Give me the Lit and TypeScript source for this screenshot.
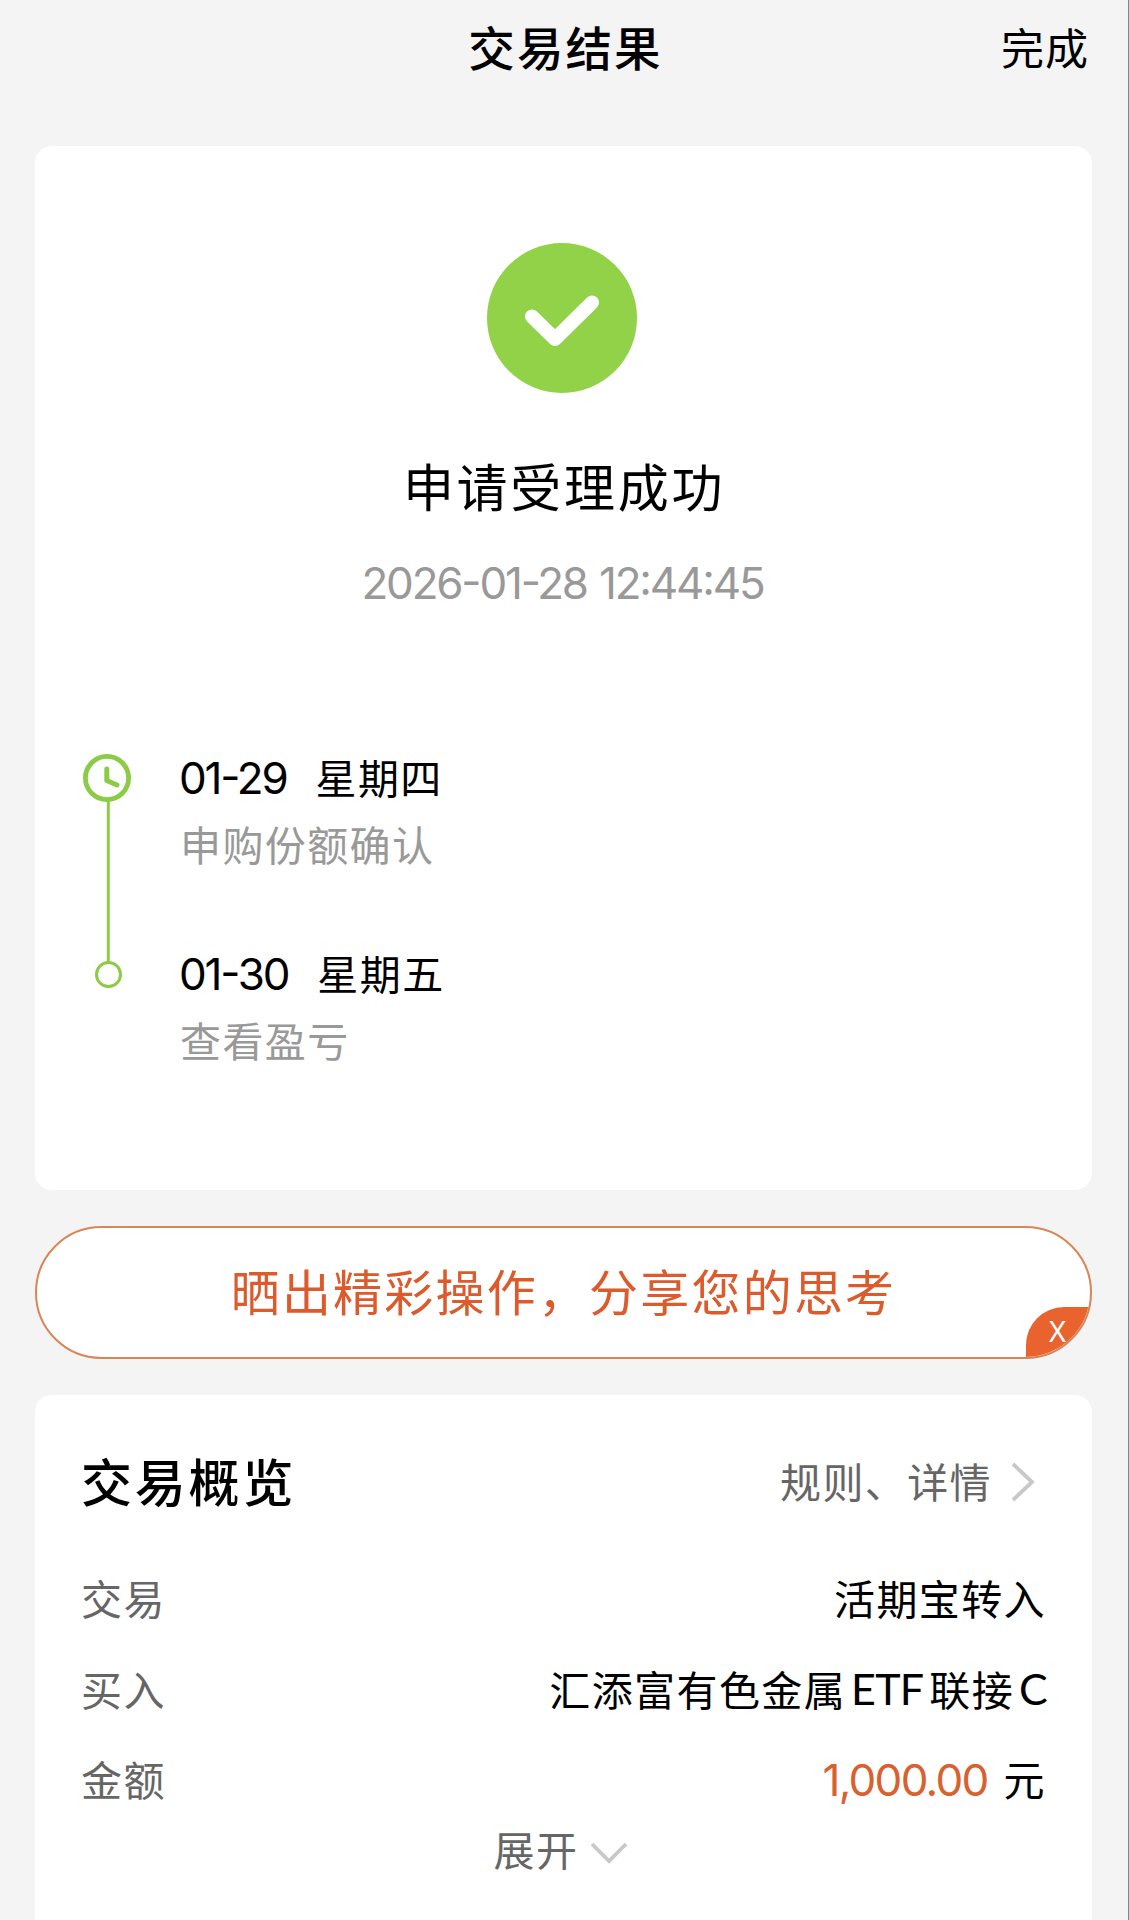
import { LitElement, html, css, svg } from "lit";
import { customElement } from "lit/decorators.js";

@customElement("app-root")
export class AppRoot extends LitElement {
  static styles = css`
    :host {
      display: block;
      font-family: "Noto Sans CJK SC", sans-serif;
      color: #000;
    }
    * {
      box-sizing: border-box;
    }
    .page {
      width: 1129px;
      height: 1920px;
      overflow: hidden;
      background: #f4f4f4;
      border-right: 1px solid #858585;
      padding: 0 36px 0 35px;
      display: flex;
      flex-direction: column;
    }
    .cjk {
      font-size: 41px;
      letter-spacing: 1.4px;
      line-height: 50px;
      white-space: nowrap;
    }
    .num {
      font-family: "Inter", sans-serif;
      font-size: 44px;
      letter-spacing: -2.2px;
      line-height: 50px;
      font-feature-settings: "case" 1;
    }
    header {
      flex: none;
      height: 146px;
      display: grid;
      grid-template-columns: 1fr auto 1fr;
      align-items: start;
      padding-right: 3px;
    }
    .title {
      grid-column: 2;
      font-size: 46.5px;
      font-weight: 500;
      letter-spacing: 2.1px;
      line-height: 60px;
      margin-top: 16px;
      margin-left: 7px;
    }
    .done {
      justify-self: end;
      font-size: 43px;
      letter-spacing: 1px;
      line-height: 60px;
      margin-top: 16px;
    }
    .card {
      background: #fff;
      border-radius: 17px;
    }
    .result {
      flex: none;
      height: 1044px;
      display: flex;
      flex-direction: column;
      align-items: center;
    }
    .check {
      display: block;
      width: 152px;
      height: 152px;
      margin-top: 96px;
      margin-right: 3px;
    }
    .status {
      font-size: 51px;
      letter-spacing: 2.7px;
      line-height: 64px;
      margin-top: 59px;
      margin-left: 1px;
      white-space: nowrap;
    }
    .stamp {
      color: #999;
      margin-top: 41px;
      margin-right: 2px;
      word-spacing: 2px;
      white-space: nowrap;
    }
    .timeline {
      align-self: stretch;
      display: flex;
      margin-top: 144px;
      padding-left: 47px;
    }
    .rail {
      display: block;
      width: 52px;
      height: 240px;
      margin-right: 45px;
    }
    .steps {
      display: flex;
      flex-direction: column;
      gap: 76px;
      padding-top: 1px;
    }
    .step {
      display: flex;
      flex-direction: column;
      gap: 15px;
      height: 120px;
    }
    .when {
      display: flex;
      align-items: center;
      gap: 29px;
    }
    .when .cjk {
      position: relative;
      top: -2px;
    }
    .note {
      color: #999;
      padding-left: 1px;
    }
    .share {
      flex: none;
      position: relative;
      height: 133px;
      margin-top: 36px;
      background: #fff;
      border: 2px solid #d98558;
      border-radius: 67px;
      color: #dc5a2b;
      font-size: 49px;
      letter-spacing: 2.2px;
      line-height: 124px;
      text-align: center;
      white-space: nowrap;
      overflow: hidden;
    }
    .close {
      position: absolute;
      right: 0;
      bottom: 0;
      width: 64px;
      height: 50px;
      border-top-left-radius: 38px;
      background: #e8632e;
      color: #fff;
      font-family: "Noto Sans", sans-serif;
      font-size: 29px;
      letter-spacing: 0;
      line-height: 48px;
      padding-right: 1px;
    }
    .overview {
      flex: none;
      height: 560px;
      margin-top: 36px;
      padding: 55px 46px 0 46px;
      display: flex;
      flex-direction: column;
    }
    .head,
    .row {
      display: flex;
      justify-content: space-between;
      align-items: center;
    }
    .head {
      height: 60px;
      margin-bottom: 42px;
    }
    .heading {
      font-size: 51px;
      font-weight: 500;
      letter-spacing: 2.8px;
      line-height: 60px;
    }
    .more {
      display: flex;
      align-items: center;
      gap: 18px;
      color: #666;
      margin-right: 10px;
    }
    .more .chev {
      margin-top: 3px;
    }
    .row {
      height: 90.5px;
    }
    .label,
    .expand {
      color: #666;
    }
    .value {
      display: flex;
      align-items: center;
    }
    .latin {
      font-family: "Lato", sans-serif;
      font-size: 43px;
      letter-spacing: -0.8px;
      line-height: 50px;
      margin: 0 6px 0 5px;
      padding-top: 3px;
    }
    .tail {
      margin: 0 -1px 0 5px;
    }
    .amount {
      color: #d9602f;
      letter-spacing: -1.7px;
      margin-right: 16px;
      padding-top: 4px;
    }
    .expand {
      align-self: center;
      display: flex;
      align-items: center;
      gap: 12px;
      margin-top: -1px;
      margin-right: 5px;
    }
    .chev {
      display: block;
      flex: none;
      fill: none;
      stroke: #c8c8c8;
      stroke-width: 3.8;
    }
    .down {
      margin-top: 10px;
    }
  `;

  private check() {
    return svg`<svg class="check" viewBox="0 0 152 152">
      <circle cx="76" cy="76" r="75" fill="#92d248" />
      <path d="M46 74.5 69 97 106 60.5" fill="none" stroke="#fff" stroke-width="14"
        stroke-linecap="round" stroke-linejoin="round" />
    </svg>`;
  }

  private rail() {
    return svg`<svg class="rail" viewBox="0 0 52 240" fill="none" stroke="#8bcb45">
      <circle cx="25" cy="26" r="21.6" stroke-width="4.8" />
      <path d="M24.8 17V28.5L35 33" stroke-width="5" stroke-linecap="round" stroke-linejoin="round" />
      <path d="M26.3 49V210" stroke-width="3" />
      <circle cx="26.5" cy="222.5" r="12" stroke-width="3" />
    </svg>`;
  }

  render() {
    return html`
      <main class="page">
        <header>
          <div class="title">交易结果</div>
          <div class="done">完成</div>
        </header>
        <section class="card result">
          ${this.check()}
          <div class="status">申请受理成功</div>
          <div class="num stamp">2026-01-28 12:44:45</div>
          <div class="timeline">
            ${this.rail()}
            <div class="steps">
              <div class="step">
                <div class="when"><span class="num">01-29</span><span class="cjk">星期四</span></div>
                <div class="cjk note">申购份额确认</div>
              </div>
              <div class="step">
                <div class="when"><span class="num">01-30</span><span class="cjk">星期五</span></div>
                <div class="cjk note">查看盈亏</div>
              </div>
            </div>
          </div>
        </section>
        <div class="share">晒出精彩操作，分享您的思考<span class="close">X</span></div>
        <section class="card overview">
          <div class="head">
            <div class="heading">交易概览</div>
            <div class="cjk more">
              规则、详情
              <svg class="chev" width="26" height="40" viewBox="0 0 26 40"><path d="M3 2 22 20 3 38" /></svg>
            </div>
          </div>
          <div class="row">
            <span class="cjk label">交易</span>
            <span class="value"><span class="cjk">活期宝转入</span></span>
          </div>
          <div class="row">
            <span class="cjk label">买入</span>
            <span class="value"
              ><span class="cjk">汇添富有色金属</span><span class="latin">ETF</span
              ><span class="cjk">联接</span><span class="latin tail">C</span></span
            >
          </div>
          <div class="row">
            <span class="cjk label">金额</span>
            <span class="value"><span class="num amount">1,000.00</span><span class="cjk">元</span></span>
          </div>
          <div class="cjk expand">
            展开
            <svg class="chev down" width="38" height="24" viewBox="0 0 38 24"><path d="M2 3 19 20 36 3" /></svg>
          </div>
        </section>
      </main>
    `;
  }
}
